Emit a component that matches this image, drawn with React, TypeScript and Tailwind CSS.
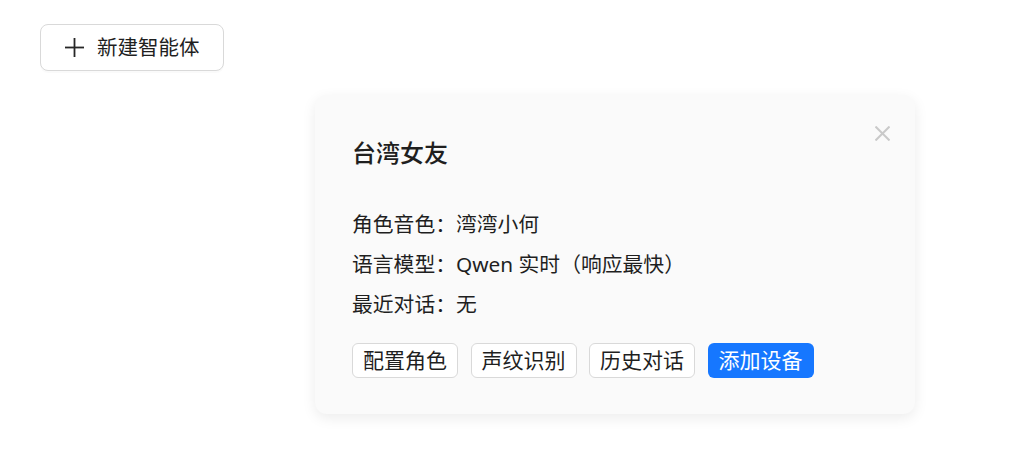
const info = [
  { label: "角色音色", value: "湾湾小何" },
  { label: "语言模型", value: "Qwen 实时（响应最快）" },
  { label: "最近对话", value: "无" },
];

const actions = ["配置角色", "声纹识别", "历史对话"];

export default function App() {
  return (
    <div
      className="min-h-[450px] bg-white px-10 pt-6 text-[#1f1f1f]"
      style={{ fontFamily: '"Noto Sans", "Noto Sans CJK SC", sans-serif' }}
    >
      <button className="flex h-[47px] w-[184px] items-center gap-[13px] rounded-lg border border-[#d9d9d9] bg-white pl-[24px] text-[20.5px] shadow-[0_2px_0_rgba(0,0,0,0.02)]">
        <svg width="19" height="19" viewBox="0 0 19 19" stroke="#262626" strokeWidth="1.8">
          <line x1="9.5" y1="0" x2="9.5" y2="19" />
          <line x1="0" y1="9.5" x2="19" y2="9.5" />
        </svg>
        新建智能体
      </button>

      <div className="relative mt-6 ml-[275px] w-[600px] rounded-xl bg-[#fafafa] px-[37px] pt-[42px] pb-9 shadow-[0_4px_14px_rgba(0,0,0,0.08)]">
        <button className="absolute top-[31px] right-[25px]">
          <svg width="15" height="15" viewBox="0 0 15 15" stroke="#c9c9c9" strokeWidth="2">
            <line x1="0.5" y1="0.5" x2="14.5" y2="14.5" />
            <line x1="14.5" y1="0.5" x2="0.5" y2="14.5" />
          </svg>
        </button>

        <h2 className="text-[24px] leading-8 font-medium">台湾女友</h2>

        <div className="mt-[35px]">
          {info.map((row) => (
            <div key={row.label} className="text-[20.8px] leading-10">
              {row.label}：{row.value}
            </div>
          ))}
        </div>

        <div className="mt-[19px] flex gap-[12.5px]">
          {actions.map((a) => (
            <button
              key={a}
              className="h-[35px] rounded-md border border-[#d9d9d9] bg-white px-[10px] text-[21px]"
            >
              {a}
            </button>
          ))}
          <button className="h-[35px] rounded-md bg-[#1677ff] px-[11px] text-[21px] text-white">
            添加设备
          </button>
        </div>
      </div>
    </div>
  );
}
